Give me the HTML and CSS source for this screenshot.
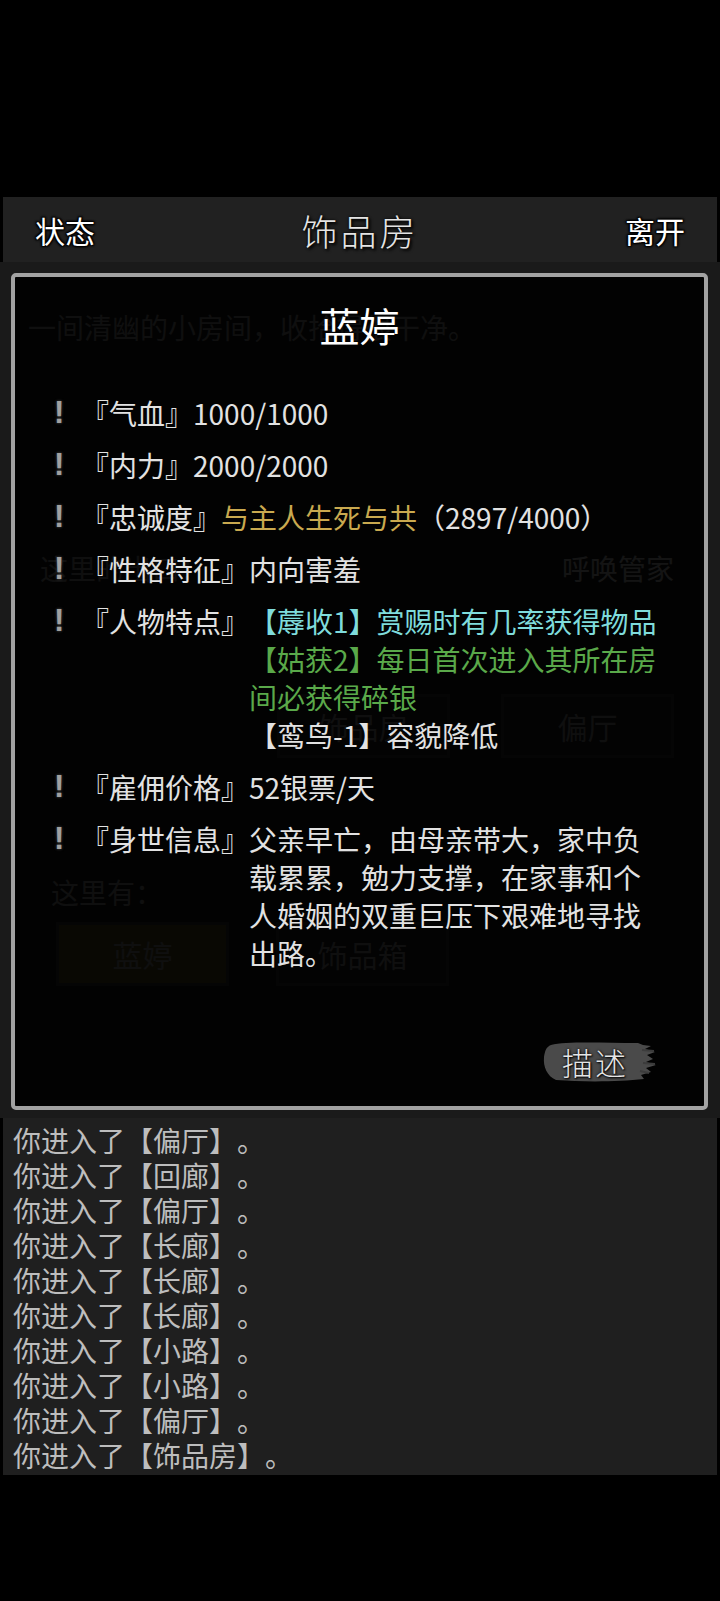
FILE: index.html
```html
<!DOCTYPE html>
<html lang="zh-CN">
<head>
    <meta charset="UTF-8">
    <meta name="viewport" content="width=device-width, initial-scale=1.0">
    <title>饰品房</title>
    <link rel="stylesheet" href="styles.css">
</head>
<body>

<div class="screen">
    <div class="status-gap"></div>

    <header class="topbar">
        <span class="topbar-btn">状态</span>
        <h1 class="topbar-title">饰品房</h1>
        <span class="topbar-btn">离开</span>
    </header>

    <main class="room">
        <p class="room-desc">一间清幽的小房间，收拾得很干净。</p>
        <div class="room-exits-head">
            <span>这里的出口：</span>
            <span class="room-call">呼唤管家</span>
        </div>
        <div class="room-exits">
            <div class="room-btn">饰品房</div>
            <div class="room-btn">偏厅</div>
        </div>
        <p class="room-here">这里有：</p>
        <div class="room-things">
            <div class="room-btn npc">蓝婷</div>
            <div class="room-btn">饰品箱</div>
        </div>

        <!-- npc detail popup -->
        <section class="modal">
            <h2 class="modal-name">蓝婷</h2>
            <ul class="attrs">
                <li class="attr">
                    <span class="attr-mark">!</span>
                    <span class="attr-label">『气血』</span>
                    <span class="attr-value">1000/1000</span>
                </li>
                <li class="attr">
                    <span class="attr-mark">!</span>
                    <span class="attr-label">『内力』</span>
                    <span class="attr-value">2000/2000</span>
                </li>
                <li class="attr">
                    <span class="attr-mark">!</span>
                    <span class="attr-label">『忠诚度』</span>
                    <span class="attr-value"><span class="gold">与主人生死与共</span>（2897/4000）</span>
                </li>
                <li class="attr">
                    <span class="attr-mark">!</span>
                    <span class="attr-label">『性格特征』</span>
                    <span class="attr-value">内向害羞</span>
                </li>
                <li class="attr">
                    <span class="attr-mark">!</span>
                    <span class="attr-label">『人物特点』</span>
                    <span class="attr-value">
                        <span class="trait cyan">【蓐收1】赏赐时有几率获得物品</span>
                        <span class="trait green">【姑获2】每日首次进入其所在房间必获得碎银</span>
                        <span class="trait">【鸾鸟-1】容貌降低</span>
                    </span>
                </li>
                <li class="attr">
                    <span class="attr-mark">!</span>
                    <span class="attr-label">『雇佣价格』</span>
                    <span class="attr-value">52银票/天</span>
                </li>
                <li class="attr">
                    <span class="attr-mark">!</span>
                    <span class="attr-label">『身世信息』</span>
                    <span class="attr-value">父亲早亡，由母亲带大，家中负载累累，勉力支撑，在家事和个人婚姻的双重巨压下艰难地寻找出路。</span>
                </li>
            </ul>

            <div class="describe">
                <svg class="brush" viewBox="0 0 118 43" width="118" height="43">
                    <path d="M9 5 C24 1 62 3 96 3 L101 5 L109 6 L103 9 L113 12 L105 15 L111 19 L104 22 L114 25 L104 28 L109 32 L99 35 L102 39 C76 42 40 42 14 40 C5 36 1 27 2 17 C3 11 4 7 9 5 Z" fill="#4a4a4a"/>
                    <path d="M100 10 L112 11 M101 23 L113 24 M98 31 L107 33" stroke="#3c3c3c" stroke-width="2"/>
                </svg>
                <span class="describe-text">描述</span>
            </div>
        </section>
    </main>

    <section class="log">
        <p>你进入了【偏厅】。</p>
        <p>你进入了【回廊】。</p>
        <p>你进入了【偏厅】。</p>
        <p>你进入了【长廊】。</p>
        <p>你进入了【长廊】。</p>
        <p>你进入了【长廊】。</p>
        <p>你进入了【小路】。</p>
        <p>你进入了【小路】。</p>
        <p>你进入了【偏厅】。</p>
        <p>你进入了【饰品房】。</p>
    </section>
</div>

</body>
</html>
```

FILE: styles.css
```css
body {
    margin: 0;
    background: #000;
    font-family: "Noto Sans CJK SC", "Noto Sans", sans-serif;
    text-spacing-trim: space-all;
}
.screen {
    width: 720px;
    height: 1601px;
    display: flex;
    flex-direction: column;
}
.status-gap {
    height: 197px;
    flex-shrink: 0;
}

/* top bar */
.topbar {
    height: 65px;
    flex-shrink: 0;
    margin: 0 3px;
    padding: 0 32px 0 32px;
    background: #212121;
    display: flex;
    align-items: center;
    justify-content: space-between;
}
.topbar-btn {
    font-size: 30px;
    line-height: 1;
    color: #fff;
    text-shadow: 0 0 2px #000, 1px 1px 2px #000, -1px -1px 2px #000, 1px -1px 2px #000, -1px 1px 2px #000;
}
.topbar-title {
    margin: 0;
    font-size: 36px;
    font-weight: 300;
    line-height: 1;
    color: #e4e4e4;
    letter-spacing: 3px;
    text-shadow: 0 0 3px #000, 2px 2px 3px #000;
}

/* room page, mostly covered */
.room {
    position: relative;
    height: 856px;
    flex-shrink: 0;
    background: #1a1a1a;
    padding-top: 46px;
    box-sizing: border-box;
    font-size: 28px;
    line-height: 38px;
    color: #a8a8a8;
}
.room-desc {
    margin: 0;
    padding-left: 28px;
}
.room-exits-head {
    margin-top: 203px;
    padding: 0 46px 0 40px;
    display: flex;
    justify-content: space-between;
}
.room-call {
    color: #e8e8e8;
}
.room-exits {
    margin-top: 107px;
    padding-right: 46px;
    display: flex;
    justify-content: flex-end;
    gap: 51px;
}
.room-here {
    margin: 115px 0 0;
    padding-left: 51px;
}
.room-things {
    margin-top: 11px;
    padding-left: 56px;
    display: flex;
    gap: 47px;
}
.room-btn {
    width: 173px;
    height: 64px;
    box-sizing: border-box;
    border: 3px solid #3c3c3c;
    background: #222;
    display: flex;
    align-items: center;
    justify-content: center;
    font-size: 30px;
}
.room-btn.npc {
    background: #6a5f2c;
}

/* popup */
.modal {
    position: absolute;
    top: 11px;
    left: 11px;
    width: 697px;
    height: 837px;
    box-sizing: border-box;
    border: 4px solid #a2a2a2;
    border-radius: 5px;
    background: rgba(0, 0, 0, 0.915);
    padding: 24px 0 23px;
    display: flex;
    flex-direction: column;
}
.modal-name {
    margin: 0 0 45px;
    text-align: center;
    font-size: 40px;
    line-height: 48px;
    font-weight: 400;
    color: #fff;
}
.attrs {
    list-style: none;
    margin: 0;
    padding: 0 0 0 36px;
    display: flex;
    flex-direction: column;
    gap: 14px;
}
.attr {
    display: flex;
    font-size: 28px;
    line-height: 38px;
    color: #e2e2e2;
}
.attr-mark {
    width: 30px;
    flex-shrink: 0;
    padding-left: 3px;
    box-sizing: border-box;
    font-family: "Liberation Sans", sans-serif;
    font-size: 31px;
    font-weight: bold;
    color: #a0a0a0;
    text-shadow: 0 0 3px #505050;
}
.attr-label {
    flex-shrink: 0;
}
.attr-value {
    max-width: 414px;
}
.gold {
    color: #c9a94f;
}
.trait {
    display: block;
}
.trait.cyan {
    color: #7fdcdc;
}
.trait.green {
    color: #5aa94a;
}
.describe {
    position: relative;
    align-self: flex-end;
    margin: auto 44px 0 0;
    width: 118px;
    height: 43px;
    display: flex;
    align-items: center;
    justify-content: center;
    padding-right: 12px;
    box-sizing: border-box;
}
.brush {
    position: absolute;
    top: 0;
    left: 0;
}
.describe-text {
    position: relative;
    font-size: 31px;
    font-weight: 300;
    line-height: 1;
    letter-spacing: 2px;
    color: #e6e6e6;
    text-shadow: 0 0 3px #000, 1px 1px 2px #000;
}

/* message log */
.log {
    height: 357px;
    flex-shrink: 0;
    margin: 0 3px;
    padding: 5px 10px 4px;
    box-sizing: border-box;
    background: #1f1f1f;
    font-size: 28px;
    line-height: 35px;
    color: #bdbdbd;
}
.log p {
    margin: 0;
}
```
